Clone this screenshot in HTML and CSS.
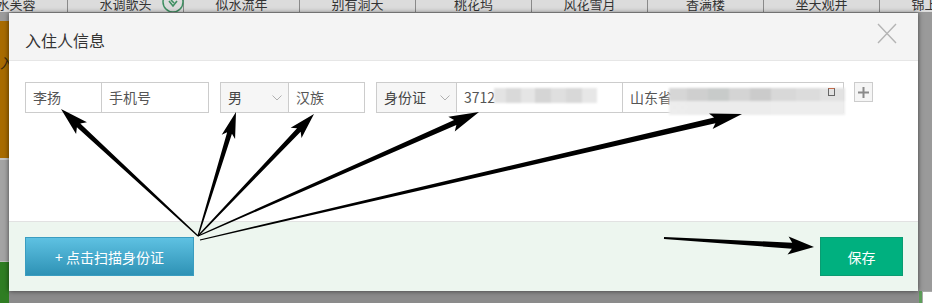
FILE: index.html
```html
<!DOCTYPE html>
<html lang="zh-CN">

<head>
    <meta charset="UTF-8">
    <meta name="viewport" content="width=device-width, initial-scale=1.0">
    <title>入住人信息</title>
    <link rel="stylesheet" href="styles.css">
</head>

<body>
    <!-- page behind the dialog -->
    <div class="page">
        <div class="tabs">
            <div class="tab"><span>出水芙蓉</span></div>
            <div class="tab"><span>水调歌头</span>
                <svg class="tab-icon" width="22" height="22" viewBox="0 0 22 22">
                    <circle cx="11" cy="11" r="10" fill="none" stroke="#3f8f62" stroke-width="1.5" />
                    <path d="M7 10 L11 15 L15 10 M9 9 L12 12" fill="none" stroke="#3f8f62" stroke-width="1.6" />
                </svg>
            </div>
            <div class="tab"><span>似水流年</span></div>
            <div class="tab"><span>别有洞天</span></div>
            <div class="tab"><span>桃花坞</span></div>
            <div class="tab"><span>风花雪月</span></div>
            <div class="tab"><span>香满楼</span></div>
            <div class="tab"><span>坐天观井</span></div>
            <div class="tab"><span>锦上添花</span></div>
        </div>

        <div class="side side-left">
            <div class="seg seg-top"></div>
            <div class="seg seg-orange"><span>入</span></div>
            <div class="seg seg-gray"></div>
            <div class="seg seg-green"></div>
        </div>

        <div class="center"></div>

        <div class="side side-right">
            <div class="cell" style="height: 52px"></div>
            <div class="cell"></div>
            <div class="cell"></div>
            <div class="cell" style="height: 47px"></div>
            <div class="cell"></div>
        </div>

        <div class="bottom">
            <div class="b b1"></div>
            <div class="b b2"></div>
            <div class="b b3">08/09</div>
            <div class="b b4"></div>
            <div class="b b5"><span>入住登记</span></div>
            <div class="b b6"></div>
            <div class="b b7"></div>
            <div class="b b8"></div>
            <div class="b b9"></div>
        </div>
    </div>

    <!-- dialog -->
    <div class="modal">
        <div class="modal-header">
            <h3 class="modal-title">入住人信息</h3>
            <svg class="modal-close" width="20" height="21" viewBox="0 0 20 21">
                <path d="M1 1 L19 20 M19 1 L1 20" stroke="#b4b4b4" stroke-width="1.4" fill="none" />
            </svg>
        </div>

        <div class="modal-body">
            <div class="guest-row">
                <div class="field-group">
                    <div class="field w-name">李扬</div>
                    <div class="field w-phone">手机号</div>
                </div>
                <div class="field-group">
                    <div class="field select w-sex">男<svg class="chevron" width="10" height="6" viewBox="0 0 10 6"><path d="M0.5 0.5 L5 5 L9.5 0.5" fill="none" stroke="#b0b0b0" /></svg></div>
                    <div class="field w-nation">汉族</div>
                </div>
                <div class="field-group">
                    <div class="field select w-type">身份证<svg class="chevron" width="10" height="6" viewBox="0 0 10 6"><path d="M0.5 0.5 L5 5 L9.5 0.5" fill="none" stroke="#b0b0b0" /></svg></div>
                    <div class="field w-id">3712<span class="mosaic mosaic-id"></span></div>
                    <div class="field w-addr">山东省<span class="mosaic mosaic-addr"></span><span class="mark"></span></div>
                </div>
                <div class="add-btn">
                    <svg width="11" height="11" viewBox="0 0 11 11"><path d="M5.5 0 V11 M0 5.5 H11" stroke="#8a8a8a" stroke-width="2" /></svg>
                </div>
            </div>
        </div>

        <div class="modal-footer">
            <button class="btn btn-scan">+ 点击扫描身份证</button>
            <button class="btn btn-save">保存</button>
        </div>
    </div>

    <!-- annotation arrows -->
    <svg class="arrows" width="932" height="303" viewBox="0 0 932 303">
        <polygon points="198.41,235.56 80.30,123.47 86.97,122.15 61,109 76.09,133.89 76.90,127.13 197.59,236.44" />
        <polygon points="198.57,236.18 231.94,133.76 235.07,138.90 236,112 221.69,134.80 227.16,132.30 197.43,235.82" />
        <polygon points="198.43,236.41 300.65,131.67 301.52,138.02 314,114 290.64,127.68 297.03,128.23 197.57,235.59" />
        <polygon points="198.24,236.55 456.34,125.06 454.78,131.44 479,112 448.32,116.80 454.08,119.94 197.76,235.45" />
        <polygon points="200.14,240.58 715.41,123.26 712.64,129.04 742,114 709.02,113.46 714.05,117.42 199.86,239.42" />
        <polygon points="663.94,239.00 791.86,248.67 787.51,254.42 814,247 788.59,236.46 792.22,242.69 664.06,237.00" />
    </svg>
</body>

</html>
```

FILE: styles.css
```css
* {
    box-sizing: border-box;
}

html, body {
    margin: 0;
    padding: 0;
}

body {
    width: 932px;
    height: 303px;
    overflow: hidden;
    position: relative;
    font-family: "Noto Sans CJK SC", "Microsoft YaHei", sans-serif;
    background: #9a9a9a;
}

/* page behind the dialog */
.page {
    display: grid;
    grid-template-columns: 9px 1fr 14px;
    grid-template-rows: 13px 1fr 12px;
    height: 303px;
}

.tabs {
    grid-column: 1 / -1;
    display: flex;
    margin-left: -48px;
    height: 13px;
    overflow: hidden;
    background: #dcdcdc;
    border-bottom: 1px solid #999;
}

.tab {
    position: relative;
    flex: 0 0 116px;
    border-right: 1px solid #8a8a8a;
    text-align: center;
    font-size: 13px;
    line-height: 13px;
    color: #333;
}

.tab span {
    display: block;
    margin-top: -3px;
}

.tab-icon {
    position: absolute;
    left: 94px;
    top: -9px;
}

.side {
    grid-row: 2 / 4;
    display: flex;
    flex-direction: column;
    overflow: hidden;
}

.seg-top {
    height: 8px;
    background: #9c9c9c;
}

.seg-orange {
    height: 137px;
    background: #a86b00;
    font-size: 14px;
    color: #3a2a10;
    padding-top: 31px;
    white-space: nowrap;
}

.seg-gray {
    height: 104px;
    background: #a4a4a4;
    border-top: 2px solid #c4c4c4;
    border-bottom: 1px solid #bdbdbd;
}

.seg-green {
    flex: 1;
    background: #2f7d23;
}

.side-right {
    background: #8b8b8b;
}

.side-right .cell {
    height: 48px;
    border-bottom: 1px solid #777;
}

.bottom {
    display: flex;
    overflow: hidden;
}

.b {
    height: 12px;
    font-size: 13px;
    line-height: 16px;
    color: #333;
    white-space: nowrap;
    overflow: hidden;
}

.b1 { width: 59px; background: #a9a9a9; }
.b2 { width: 117px; background: #b9b9b9; border-left: 1px solid #8c8c8c; }
.b3 { width: 37px; background: #5d9e5a; padding-left: 3px; color: #444; }
.b4 { width: 15px; background: #e9e9e9; }
.b5 { width: 433px; background: #fff; border-top: 1px solid #aaa; border-left: 1px solid #aaa; padding-left: 10px; }
.b6 { width: 42px; background: #e2e2e2; border-left: 1px solid #bbb; }
.b7 { width: 55px; background: #9c9c9c; }
.b8 { width: 108px; background: #2e7b25; }
.b9 { flex: 1; background: #8b8b8b; border-left: 2px solid #aaa; }

/* dialog */
.modal {
    position: absolute;
    left: 9px;
    top: 13px;
    width: 909px;
    height: 278px;
    background: #fff;
    box-shadow: 0 0 5px rgba(0, 0, 0, 0.6);
    display: flex;
    flex-direction: column;
}

.modal-header {
    height: 48px;
    background: #f4f4f4;
    border-bottom: 1px solid #e6e6e6;
    display: flex;
    justify-content: space-between;
    align-items: flex-start;
    padding: 0 21px 0 16px;
}

.modal-title {
    margin: 0;
    padding-top: 16px;
    font-size: 16px;
    line-height: 22px;
    font-weight: normal;
    color: #333;
}

.modal-close {
    margin-top: 10px;
}

.modal-body {
    height: 160px;
    padding: 21px 16px 0;
}

.guest-row {
    display: flex;
    align-items: flex-start;
    gap: 11px;
}

.field-group {
    display: flex;
}

.field {
    position: relative;
    height: 31px;
    border: 1px solid #ccc;
    padding: 0 7px;
    font-size: 14px;
    line-height: 29px;
    color: #555;
    background: #fff;
    white-space: nowrap;
}

.field + .field {
    margin-left: -1px;
}

.select {
    display: flex;
    justify-content: space-between;
    align-items: center;
    background: #f6f6f6;
    color: #444;
    padding-right: 6px;
}

.w-name { width: 77px; }
.w-phone { width: 108px; }
.w-sex { width: 69px; }
.w-nation { width: 77px; }
.w-type { width: 81px; }
.w-id { width: 167px; }
.w-addr { width: 222px; }

.mosaic {
    position: absolute;
    filter: blur(1.2px);
}

.mosaic-id {
    left: 37px;
    top: 5px;
    width: 103px;
    height: 15px;
    background: linear-gradient(90deg, #e3e3e3 0 12%, #d9d9d9 12% 26%, #e5e5e5 26% 40%, #d5d5d5 40% 55%, #dfdfdf 55% 70%, #d8d8d8 70% 85%, #e7e7e7 85%);
}

.mosaic-addr {
    left: 46px;
    top: 5px;
    width: 176px;
    height: 27px;
    background:
        linear-gradient(to bottom, transparent 50%, rgba(238, 238, 238, 0.95) 50%),
        linear-gradient(90deg, #d6d6d6 0 10%, #cfcfcf 10% 22%, #c8cbca 22% 34%, #d4d4d4 34% 46%, #cbcbcb 46% 58%, #d8d8d8 58% 72%, #dcdcdc 72% 86%, #e2e2e2 86%);
}

.mark {
    position: absolute;
    left: 205px;
    top: 5px;
    width: 7px;
    height: 8px;
    border: 1px solid #666;
    border-top-color: #c46a4a;
}

.add-btn {
    width: 19px;
    height: 20px;
    margin-left: -1px;
    border: 1px solid #ccc;
    background: #f5f5f5;
    display: flex;
    align-items: center;
    justify-content: center;
}

.modal-footer {
    flex: 1;
    display: flex;
    justify-content: space-between;
    align-items: flex-start;
    padding: 15px 15px 0 16px;
    border-top: 1px solid #e2e2e2;
    background: #edf6ef;
}

.btn {
    height: 39px;
    border: 1px solid transparent;
    font-family: "Noto Sans CJK SC", "Microsoft YaHei", sans-serif;
    font-size: 14px;
    color: #fff;
    padding: 0;
    cursor: pointer;
}

.btn-scan {
    width: 169px;
    background: linear-gradient(#5ec1e2, #2e92b5);
    border-color: #3a9dc0;
}

.btn-save {
    width: 83px;
    background: #00b07f;
    border-color: #0a9c72;
}

/* annotation arrows */
.arrows {
    position: absolute;
    left: 0;
    top: 0;
    pointer-events: none;
}

.arrows polygon {
    fill: #000;
}
```
